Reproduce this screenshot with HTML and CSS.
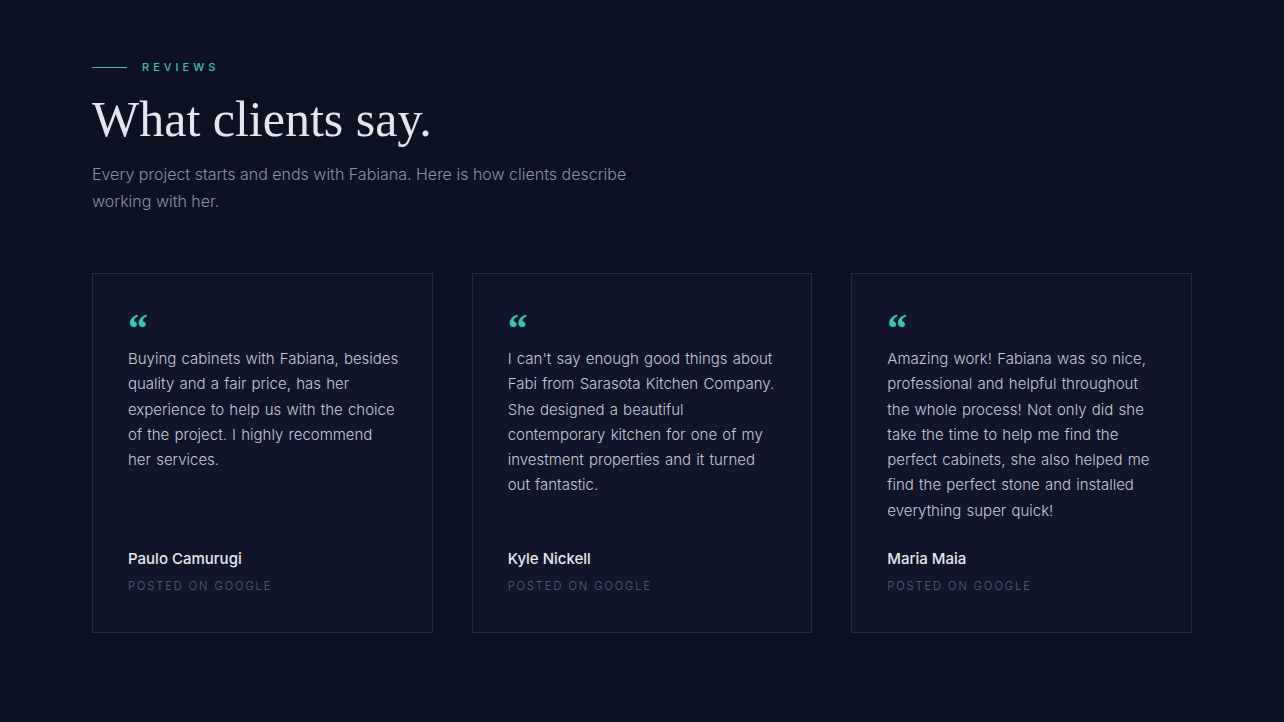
FILE: index.html
```html
<!DOCTYPE html>
<html lang="en">
<head>
    <meta charset="UTF-8">
    <meta name="viewport" content="width=device-width, initial-scale=1.0">
    <title>Reviews</title>
    <link rel="stylesheet" href="styles.css">
</head>
<body>
    <section class="reviews">
        <div class="eyebrow">
            <span class="eyebrow-line"></span>
            <span class="eyebrow-text">Reviews</span>
        </div>
        <h2 class="title">What clients say.</h2>
        <p class="intro">Every project starts and ends with Fabiana. Here is how clients describe working with her.</p>

        <div class="cards">
            <article class="card">
                <div class="quote-mark">&ldquo;</div>
                <p class="quote">Buying cabinets with Fabiana, besides quality and a fair price, has her experience to help us with the choice of the project. I highly recommend her services.</p>
                <div class="author">
                    <div class="name">Paulo Camurugi</div>
                    <div class="source">Posted on Google</div>
                </div>
            </article>
            <article class="card">
                <div class="quote-mark">&ldquo;</div>
                <p class="quote">I can't say enough good things about Fabi from Sarasota Kitchen Company. She designed a beautiful contemporary kitchen for one of my investment properties and it turned out fantastic.</p>
                <div class="author">
                    <div class="name">Kyle Nickell</div>
                    <div class="source">Posted on Google</div>
                </div>
            </article>
            <article class="card">
                <div class="quote-mark">&ldquo;</div>
                <p class="quote">Amazing work! Fabiana was so nice, professional and helpful throughout the whole process! Not only did she take the time to help me find the perfect cabinets, she also helped me find the perfect stone and installed everything super quick!</p>
                <div class="author">
                    <div class="name">Maria Maia</div>
                    <div class="source">Posted on Google</div>
                </div>
            </article>
        </div>
    </section>
</body>
</html>
```

FILE: styles.css
```css
body {
    margin: 0;
    background-color: #0c1124;
    font-family: Inter, 'Liberation Sans', sans-serif;
    color: #c5c9d4;
}
.reviews {
    width: 1100px;
    padding: 60px 92px 0;
}
.eyebrow {
    display: flex;
    align-items: center;
    gap: 15px;
    height: 14px;
}
.eyebrow-line {
    width: 35px;
    height: 1px;
    background-color: #3bc4b4;
}
.eyebrow-text {
    font-size: 11px;
    font-weight: 500;
    letter-spacing: 4px;
    text-transform: uppercase;
    color: #3bc4b4;
}
.title {
    margin: 14px 0 0;
    font-family: 'Liberation Serif', 'DejaVu Serif', serif;
    font-weight: 400;
    font-size: 50px;
    line-height: 62px;
    color: #e4e6ee;
}
.intro {
    margin: 11px 0 0;
    width: 560px;
    font-size: 16px;
    font-weight: 300;
    line-height: 27px;
    color: #8c92a4;
}
.cards {
    display: grid;
    grid-template-columns: repeat(3, 1fr);
    gap: 39px;
    margin-top: 58px;
}
.card {
    display: flex;
    flex-direction: column;
    min-height: 358px;
    box-sizing: border-box;
    padding: 35px 33px 39px 35px;
    background-color: #10152a;
    border: 1px solid #262c42;
}
.quote-mark {
    height: 22px;
    font-family: 'Liberation Serif', serif;
    font-size: 40px;
    font-weight: 700;
    line-height: 40px;
    color: #3bc4b4;
}
.quote {
    flex: 1;
    margin: 15px 0 0;
    font-size: 15px;
    font-weight: 300;
    line-height: 25.3px;
    word-spacing: 1px;
    color: #c5c9d4;
}
.author {
    margin-top: 26px;
}
.name {
    font-size: 15px;
    font-weight: 500;
    line-height: 20px;
    color: #e6e8ee;
}
.source {
    margin-top: 10px;
    font-size: 11px;
    font-weight: 300;
    letter-spacing: 2px;
    text-transform: uppercase;
    color: #5c6277;
}
```
